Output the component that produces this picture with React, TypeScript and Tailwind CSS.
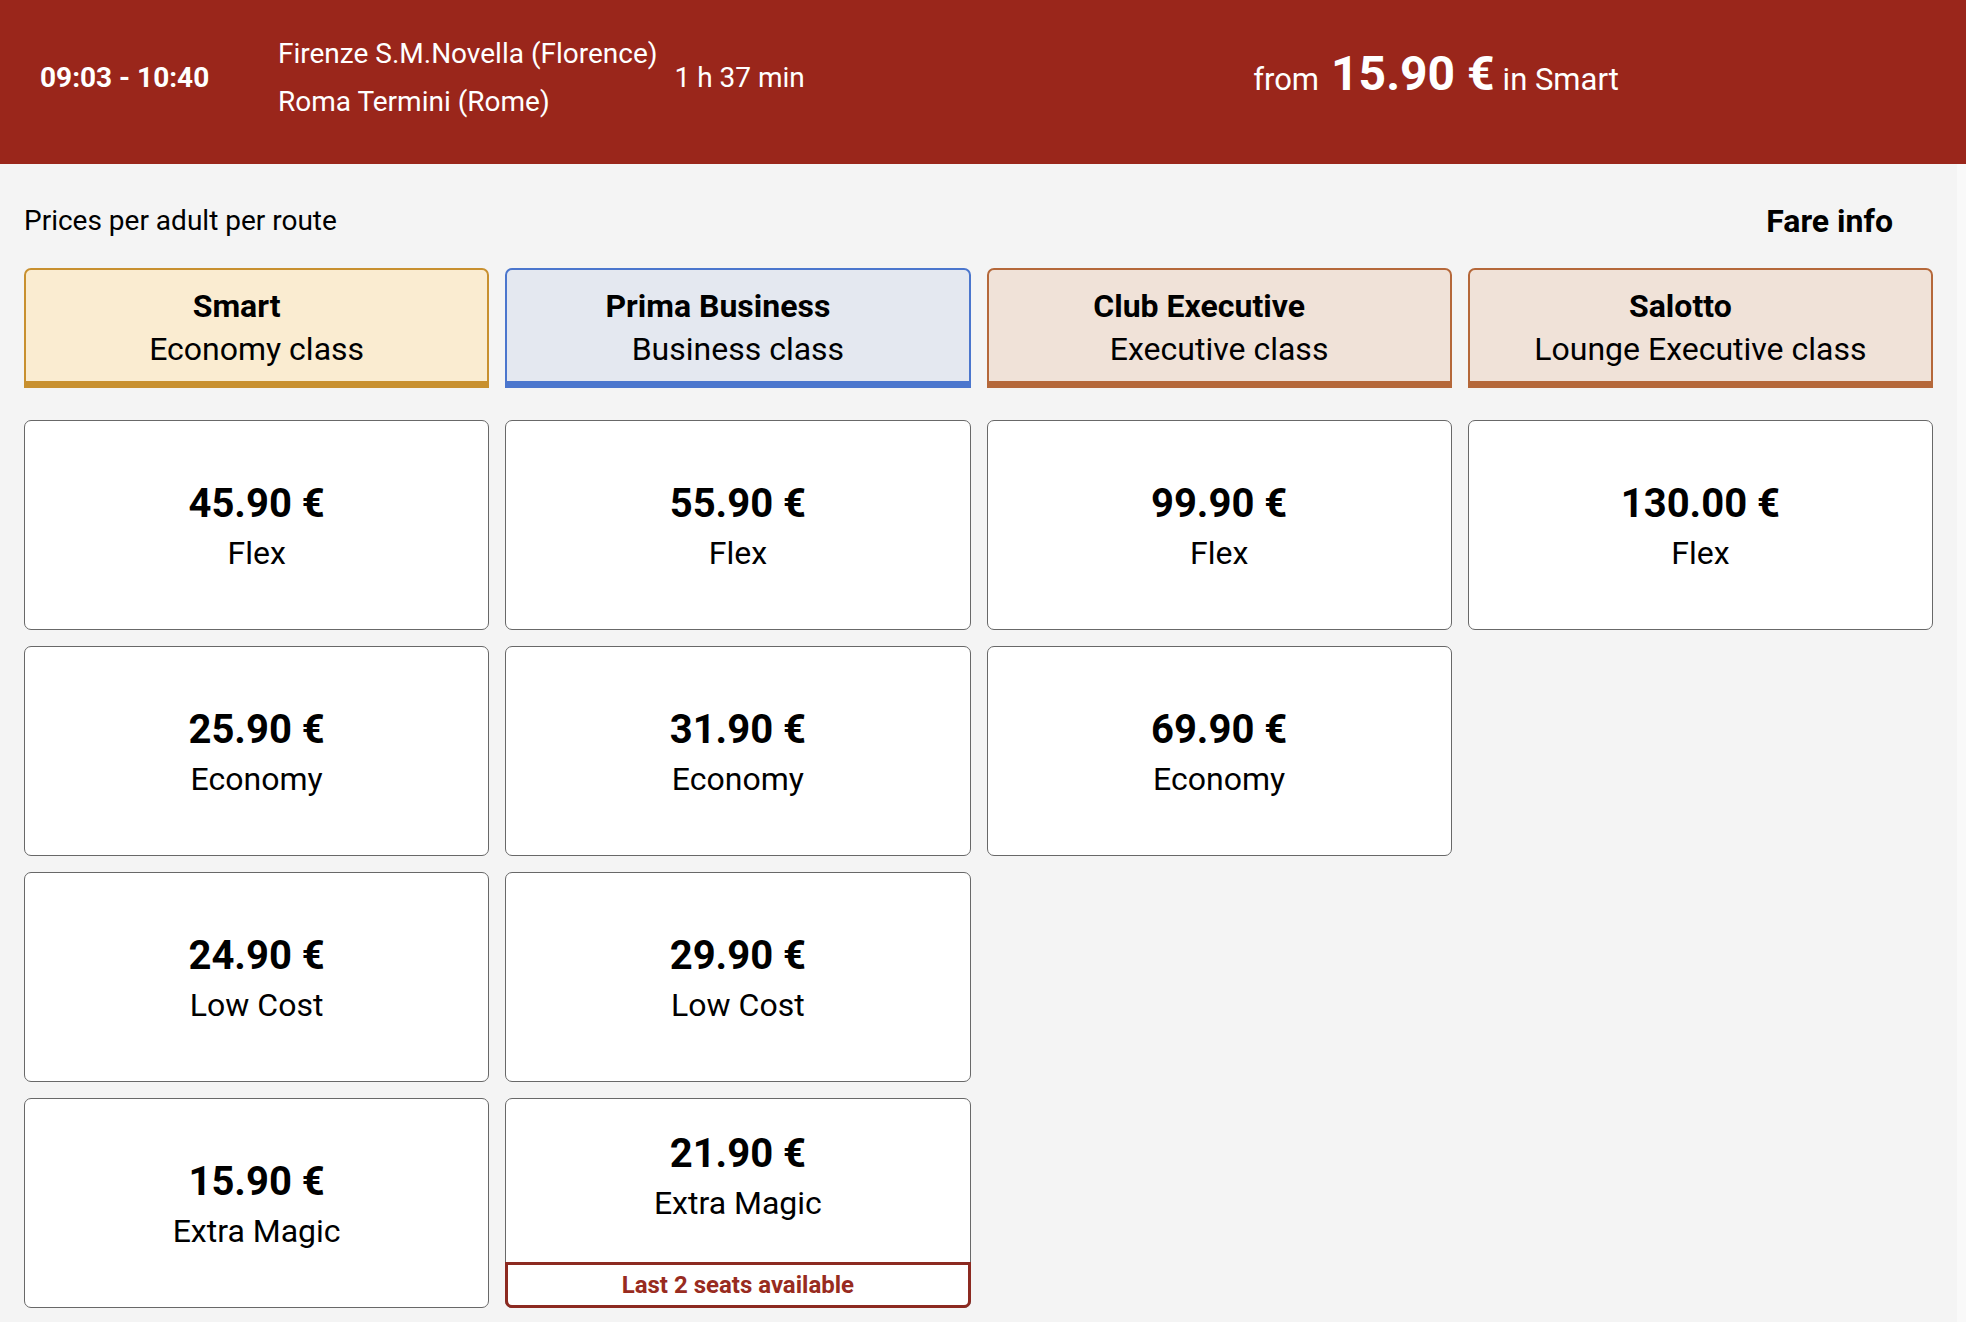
import React from 'react';

interface Fare {
  price: string;
  name: string;
  note?: string;
}

interface ServiceClass {
  title: string;
  subtitle: string;
  box: string;
  fares: Fare[];
}

const classes: ServiceClass[] = [
  {
    title: 'Smart',
    subtitle: 'Economy class',
    box: 'border-[#c8902f] bg-[#faecd1]',
    fares: [
      { price: '45.90 €', name: 'Flex' },
      { price: '25.90 €', name: 'Economy' },
      { price: '24.90 €', name: 'Low Cost' },
      { price: '15.90 €', name: 'Extra Magic' },
    ],
  },
  {
    title: 'Prima Business',
    subtitle: 'Business class',
    box: 'border-[#4b76cd] bg-[#e4e8f0]',
    fares: [
      { price: '55.90 €', name: 'Flex' },
      { price: '31.90 €', name: 'Economy' },
      { price: '29.90 €', name: 'Low Cost' },
      { price: '21.90 €', name: 'Extra Magic', note: 'Last 2 seats available' },
    ],
  },
  {
    title: 'Club Executive',
    subtitle: 'Executive class',
    box: 'border-[#b5683a] bg-[#f0e2d8]',
    fares: [
      { price: '99.90 €', name: 'Flex' },
      { price: '69.90 €', name: 'Economy' },
    ],
  },
  {
    title: 'Salotto',
    subtitle: 'Lounge Executive class',
    box: 'border-[#b5683a] bg-[#f0e2d8]',
    fares: [{ price: '130.00 €', name: 'Flex' }],
  },
];

function FareCard({ fare }: { fare: Fare }) {
  return (
    <div className="flex h-[210px] flex-col rounded-[7px] border border-[#686868] bg-white">
      <div className={`flex flex-1 flex-col items-center justify-center ${fare.note ? 'pb-[11px]' : ''}`}>
        <div className="text-[40px] font-bold leading-[56px]">{fare.price}</div>
        <div className="text-[32px] leading-[43px]">{fare.name}</div>
      </div>
      {fare.note && (
        <div className="-mx-px -mb-px flex h-[46px] items-center justify-center rounded-b-[7px] border-[3px] border-[#8c2a21] bg-white text-[24px] font-bold text-[#982b20]">
          {fare.note}
        </div>
      )}
    </div>
  );
}

export default function App() {
  return (
    <div className="min-h-screen bg-[#f9f9f9] font-['Roboto',sans-serif] text-black">
      {/* journey summary */}
      <header className="flex h-[164px] items-center bg-[#9a261b] pb-2 text-white">
        <div className="flex w-[906px] shrink-0 items-center pl-10">
          <div className="w-[238px] text-[28px] font-bold">09:03 - 10:40</div>
          <div className="text-[28px] leading-[48px]">
            <div>Firenze S.M.Novella (Florence)</div>
            <div>Roma Termini (Rome)</div>
          </div>
          <div className="ml-[17px] text-[28px]">1 h 37 min</div>
        </div>
        <div className="flex flex-1 justify-center pb-[9px]">
          <div className="flex items-baseline">
            <span className="mr-[12px] text-[31px]">from</span>
            <span className="text-[48px] font-bold">15.90 €</span>
            <span className="ml-[8px] text-[31px]">in Smart</span>
          </div>
        </div>
      </header>

      <main className="mr-[9px] bg-[#f4f4f4] px-6 pt-6 pb-[14px]">
        <div className="mb-[14px] flex h-[66px] items-center justify-between">
          <span className="text-[28px]">Prices per adult per route</span>
          <span className="pr-10 text-[32px] font-bold">Fare info</span>
        </div>

        <div className="grid grid-cols-4 gap-4">
          {classes.map((c) => (
            <div key={c.title} className="flex flex-col">
              <div
                className={`rounded-t-[7px] border-2 border-b-[7px] pt-[15px] pb-[10px] text-center text-[32px] leading-[43px] ${c.box}`}
              >
                <div className="pr-10 font-bold">{c.title}</div>
                <div>{c.subtitle}</div>
              </div>
              <div className="mt-[32px] flex flex-col gap-4">
                {c.fares.map((f) => (
                  <FareCard key={f.name} fare={f} />
                ))}
              </div>
            </div>
          ))}
        </div>
      </main>
    </div>
  );
}
